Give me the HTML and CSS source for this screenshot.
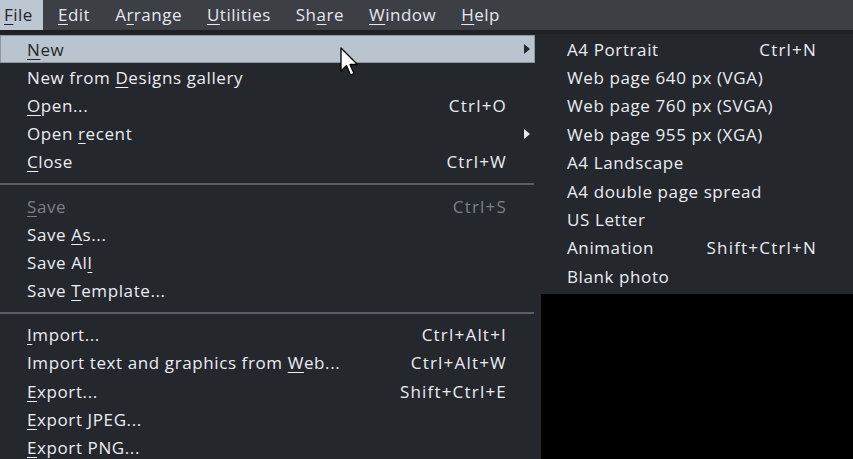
FILE: index.html
```html
<!DOCTYPE html>
<html lang="en">
<head>
  <meta charset="UTF-8">
  <title>File menu</title>
  <link rel="stylesheet" href="styles.css">
</head>
<body>

  <div class="menubar">
    <span class="bar-item active"><u>F</u>ile</span>
    <span class="bar-item"><u>E</u>dit</span>
    <span class="bar-item">A<u>r</u>range</span>
    <span class="bar-item"><u>U</u>tilities</span>
    <span class="bar-item">Sh<u>a</u>re</span>
    <span class="bar-item"><u>W</u>indow</span>
    <span class="bar-item"><u>H</u>elp</span>
  </div>

  <div class="workspace">
    <div class="menu">
      <div class="row hover"><span><u>N</u>ew</span><span class="arrow"></span></div>
      <div class="row"><span>New from <u>D</u>esigns gallery</span></div>
      <div class="row"><span><u>O</u>pen...</span><span class="key">Ctrl+O</span></div>
      <div class="row"><span>Open <u>r</u>ecent</span><span class="arrow"></span></div>
      <div class="row"><span><u>C</u>lose</span><span class="key">Ctrl+W</span></div>
      <div class="sep"></div>
      <div class="row disabled"><span><u>S</u>ave</span><span class="key">Ctrl+S</span></div>
      <div class="row"><span>Save <u>A</u>s...</span></div>
      <div class="row"><span>Save Al<u>l</u></span></div>
      <div class="row"><span>Save <u>T</u>emplate...</span></div>
      <div class="sep"></div>
      <div class="row"><span><u>I</u>mport...</span><span class="key">Ctrl+Alt+I</span></div>
      <div class="row"><span>Import text and graphics from <u>W</u>eb...</span><span class="key">Ctrl+Alt+W</span></div>
      <div class="row"><span><u>E</u>xport...</span><span class="key">Shift+Ctrl+E</span></div>
      <div class="row"><span><u>E</u>xport JPEG...</span></div>
      <div class="row"><span><u>E</u>xport PNG...</span></div>

      <svg class="cursor" width="22" height="32" viewBox="0 0 22 32">
        <path d="M1 1 L1 24 L6.5 18.5 L10.5 28 L14 26.5 L10 17.5 L17.5 17.5 Z" fill="#fff" stroke="#000" stroke-width="1.3" stroke-linejoin="round"/>
      </svg>
    </div>

    <div class="side">
      <div class="submenu">
        <div class="row"><span>A4 Portrait</span><span class="key">Ctrl+N</span></div>
        <div class="row"><span>Web page 640 px (VGA)</span></div>
        <div class="row"><span>Web page 760 px (SVGA)</span></div>
        <div class="row"><span>Web page 955 px (XGA)</span></div>
        <div class="row"><span>A4 Landscape</span></div>
        <div class="row"><span>A4 double page spread</span></div>
        <div class="row"><span>US Letter</span></div>
        <div class="row"><span>Animation</span><span class="key">Shift+Ctrl+N</span></div>
        <div class="row"><span>Blank photo</span></div>
      </div>
    </div>
  </div>

</body>
</html>
```

FILE: styles.css
```css
body { margin: 0; background: #000; font-family: "Open Sans", "DejaVu Sans", sans-serif; font-size: 17px; letter-spacing: 0.6px; color: #eaedf2; overflow: hidden; }
u { text-decoration-thickness: 1px; text-underline-offset: 3px; }

.menubar { display: flex; height: 30px; background: #3c3f44; border-bottom: 4px solid #1e2024; font-size: 17px; letter-spacing: 0.5px; }
.bar-item { display: flex; align-items: center; padding: 0 10px 1px 4px; margin-right: 11px; color: #e4e8ee; }
.bar-item.active { background: #bcc7d1; color: #23262b; }

.workspace { display: flex; height: 425px; }

.menu { position: relative; width: 541px; background: #24272c; padding-top: 1px; }
.menu .row { display: flex; align-items: center; height: 28.2px; padding: 0 29px 0 27px; margin-right: 6px; }
.row .key { margin-left: auto; letter-spacing: 1.2px; margin-right: -1px; }
.menu .row.hover { background: #b9c4ce; color: #24272c; box-shadow: inset 0 0 0 1px #8e979f; }
.menu .row.disabled { color: #7b8087; }
.arrow { margin-left: auto; margin-right: -24px; width: 0; height: 0; border-top: 5px solid transparent; border-bottom: 5px solid transparent; border-left: 6px solid #e4e8ee; }
.row.hover .arrow { border-left-color: #24272c; }
.sep { height: 16px; display: flex; align-items: center; margin-right: 7px; }
.sep::before { content: ""; flex: 1; height: 2px; background: #5b5f65; }

.cursor { position: absolute; left: 340px; top: 13px; }

.side { flex: 1; }
.submenu { background: #24272c; padding: 1px 0 3px; }
.submenu .row { display: flex; align-items: center; height: 28.4px; padding: 0 37px 0 26px; }
```
